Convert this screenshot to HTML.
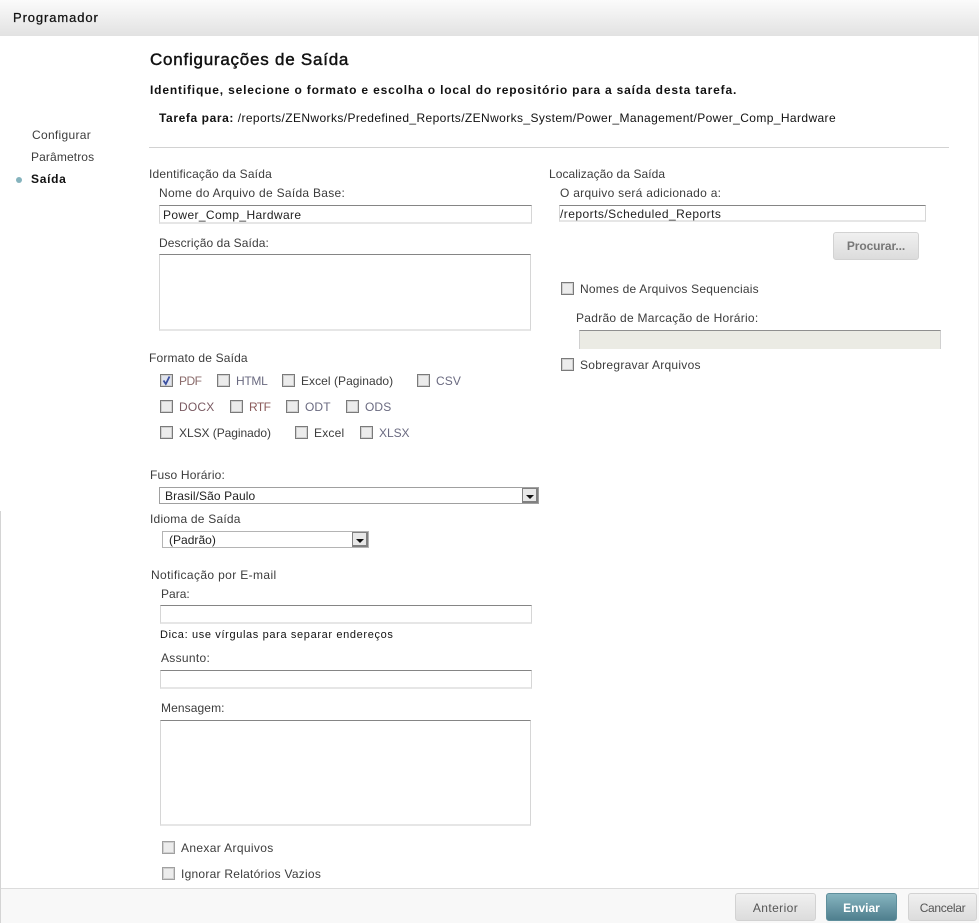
<!DOCTYPE html>
<html lang="pt">
<head>
<meta charset="utf-8">
<title>Programador</title>
<style>
html,body{margin:0;padding:0;background:#fff}
#p{position:relative;width:979px;height:923px;overflow:hidden;background:#fff;font-family:"Liberation Sans",sans-serif;font-size:12px;color:#3c3c3c}
#p div,#p span{position:absolute;box-sizing:border-box}
.t{white-space:nowrap;line-height:16px;height:16px;letter-spacing:.24px}
.b{font-weight:bold;color:#111}
.in{background:#fff;border:1px solid #e0e0e0;border-bottom:2px solid #e6e6e6;border-top:1px solid #858585;border-left-color:#d6d6d6;border-right-color:#d6d6d6}
.cb{width:13px;height:13px;border:1px solid #7a7a7a;background:#ececec;box-shadow:inset 0 0 0 1px #cfcfcf}
.btn{border:1px solid #d2d2d2;border-radius:3px;background:linear-gradient(#f0f0f0,#dcdcdc);text-align:center;font-weight:normal;color:#555;line-height:25px;letter-spacing:.2px}
.sel{background:#fff;border:1px solid #a0a0a0}
.ar{width:16px;top:0;bottom:0;right:0;background:#e8e8e8;border:2px solid #808080;border-top-width:1px;border-left-width:1px}
.ar:after{content:"";position:absolute;left:3px;top:6px;border:4px solid transparent;border-top:4px solid #111;border-bottom:0}
.c1{color:#6a6a80}
</style>
</head>
<body>
<div id="p">
  <div style="left:0;top:0;width:979px;height:36px;background:linear-gradient(#fbfbfb,#e2e2e2)"></div>
  <div class="t" style="left:13px;top:10px;font-size:13px;color:#111;letter-spacing:.9px;-webkit-text-stroke:.25px #111">Programador</div>

  <div style="left:0;top:511px;width:1px;height:412px;background:#d4d4d4"></div>
  <div style="left:978px;top:36px;width:1px;height:887px;background:#f0f0f0"></div>

  <div class="t" style="left:150px;top:51px;font-size:17px;line-height:18px;height:18px;color:#111;letter-spacing:.76px;-webkit-text-stroke:.45px #111">Configurações de Saída</div>
  <div class="t b" style="left:150px;top:82px;letter-spacing:.83px">Identifique, selecione o formato e escolha o local do repositório para a saída desta tarefa.</div>
  <div class="t" style="left:159px;top:110px;color:#111;letter-spacing:.39px"><b style="letter-spacing:.6px">Tarefa para:</b> /reports/ZENworks/Predefined_Reports/ZENworks_System/Power_Management/Power_Comp_Hardware</div>

  <div class="t" style="left:32px;top:127px;letter-spacing:.3px">Configurar</div>
  <div class="t" style="left:31px;top:149px;letter-spacing:.12px">Parâmetros</div>
  <div class="t b" style="left:31px;top:171px;letter-spacing:.7px">Saída</div>
  <div style="left:16px;top:177px;width:6px;height:6px;border-radius:50%;background:#85b3bd"></div>

  <div style="left:149px;top:147px;width:800px;height:1px;background:#d2d2d2"></div>

  <div class="t" style="left:149px;top:166px;letter-spacing:.19px">Identificação da Saída</div>
  <div class="t" style="left:159px;top:185px;letter-spacing:.29px">Nome do Arquivo de Saída Base:</div>
  <div class="in" style="left:159px;top:205px;width:373px;height:19px"></div>
  <div class="t" style="left:163px;top:207px;color:#222;letter-spacing:.37px">Power_Comp_Hardware</div>
  <div class="t" style="left:159px;top:235px;letter-spacing:.1px">Descrição da Saída:</div>
  <div class="in" style="left:159px;top:254px;width:372px;height:77px"></div>

  <div class="t" style="left:149px;top:350px;letter-spacing:.17px">Formato de Saída</div>

  <div class="cb" style="left:160px;top:374px;background:#dfe3ee"></div>
  <svg style="position:absolute;left:160px;top:374px" width="13" height="13" viewBox="0 0 13 13"><path d="M3.5 6.5 L5.8 10 L9.5 2.5" fill="none" stroke="#3a4fa0" stroke-width="1.8"/></svg>
  <div class="t" style="left:179px;top:373px;color:#8a6a6a;letter-spacing:-.55px">PDF</div>
  <div class="cb" style="left:217px;top:374px"></div>
  <div class="t c1" style="left:236px;top:373px;letter-spacing:-.3px">HTML</div>
  <div class="cb" style="left:282px;top:374px"></div>
  <div class="t" style="left:301px;top:373px;letter-spacing:.05px">Excel (Paginado)</div>
  <div class="cb" style="left:417px;top:374px"></div>
  <div class="t c1" style="left:436px;top:373px;letter-spacing:.1px">CSV</div>

  <div class="cb" style="left:160px;top:400px"></div>
  <div class="t" style="left:179px;top:399px;color:#7a5a62;letter-spacing:.2px">DOCX</div>
  <div class="cb" style="left:230px;top:400px"></div>
  <div class="t" style="left:249px;top:399px;color:#8a5a5a;letter-spacing:-.55px">RTF</div>
  <div class="cb" style="left:286px;top:400px"></div>
  <div class="t c1" style="left:305px;top:399px;letter-spacing:.1px">ODT</div>
  <div class="cb" style="left:346px;top:400px"></div>
  <div class="t c1" style="left:365px;top:399px;letter-spacing:.1px">ODS</div>

  <div class="cb" style="left:160px;top:426px"></div>
  <div class="t" style="left:179px;top:425px;letter-spacing:-.05px">XLSX (Paginado)</div>
  <div class="cb" style="left:295px;top:426px"></div>
  <div class="t" style="left:314px;top:425px;letter-spacing:.2px">Excel</div>
  <div class="cb" style="left:360px;top:426px"></div>
  <div class="t c1" style="left:379px;top:425px;letter-spacing:-.05px">XLSX</div>

  <div class="t" style="left:150px;top:467px;letter-spacing:.18px">Fuso Horário:</div>
  <div class="sel" style="left:159px;top:487px;width:380px;height:17px"><span class="ar"></span></div>
  <div class="t" style="left:165px;top:488px;color:#222;letter-spacing:.1px">Brasil/São Paulo</div>

  <div class="t" style="left:150px;top:511px;letter-spacing:.22px">Idioma de Saída</div>
  <div class="sel" style="left:162px;top:531px;width:207px;height:17px;border-color:#b4b4b4"><span class="ar"></span></div>
  <div class="t" style="left:169px;top:532px;color:#222;letter-spacing:.02px">(Padrão)</div>

  <div class="t" style="left:151px;top:567px;letter-spacing:.37px">Notificação por E-mail</div>
  <div class="t" style="left:161px;top:586px;letter-spacing:.02px">Para:</div>
  <div class="in" style="left:160px;top:605px;width:372px;height:19px"></div>
  <div class="t" style="left:160px;top:627px;font-size:11px;color:#111;letter-spacing:.64px">Dica: use vírgulas para separar endereços</div>
  <div class="t" style="left:161px;top:650px;letter-spacing:.3px">Assunto:</div>
  <div class="in" style="left:160px;top:670px;width:372px;height:19px"></div>
  <div class="t" style="left:161px;top:700px;letter-spacing:.1px">Mensagem:</div>
  <div class="in" style="left:160px;top:720px;width:371px;height:106px"></div>

  <div class="cb" style="left:162px;top:841px;border-color:#a0a0a0"></div>
  <div class="t" style="left:181px;top:840px;letter-spacing:.35px">Anexar Arquivos</div>
  <div class="cb" style="left:162px;top:867px;border-color:#a0a0a0"></div>
  <div class="t" style="left:181px;top:866px;letter-spacing:.25px">Ignorar Relatórios Vazios</div>

  <div class="t" style="left:549px;top:166px;letter-spacing:.07px">Localização da Saída</div>
  <div class="t" style="left:560px;top:185px;letter-spacing:.28px">O arquivo será adicionado a:</div>
  <div class="in" style="left:559px;top:205px;width:367px;height:17px"></div>
  <div class="t" style="left:560px;top:206px;color:#222;letter-spacing:.46px">/reports/Scheduled_Reports</div>
  <div class="btn" style="left:833px;top:232px;width:86px;height:28px;font-weight:bold;color:#777;line-height:27px;letter-spacing:-.1px">Procurar...</div>

  <div class="cb" style="left:561px;top:282px"></div>
  <div class="t" style="left:580px;top:281px;letter-spacing:.21px">Nomes de Arquivos Sequenciais</div>
  <div class="t" style="left:576px;top:310px;letter-spacing:.28px">Padrão de Marcação de Horário:</div>
  <div style="left:579px;top:330px;width:362px;height:19px;background:#ebebe4;border-top:1px solid #8f8f8f;border-left:1px solid #d0d0d0;border-right:1px solid #d0d0d0"></div>
  <div class="cb" style="left:561px;top:358px"></div>
  <div class="t" style="left:580px;top:357px;letter-spacing:.27px">Sobregravar Arquivos</div>

  <div style="left:1px;top:888px;width:978px;height:35px;background:#f8f8f8;border-top:1px solid #dcdcdc"></div>
  <div class="btn" style="left:735px;top:893px;width:81px;height:28px;letter-spacing:.4px;line-height:28px">Anterior</div>
  <div class="btn" style="left:826px;top:893px;width:71px;height:28px;background:linear-gradient(#86b4bf,#4f7f8e);border-color:#5f8f9c;color:#fff;font-weight:bold;letter-spacing:0;line-height:28px">Enviar</div>
  <div class="btn" style="left:908px;top:893px;width:69px;height:28px;letter-spacing:-.3px;line-height:28px">Cancelar</div>
</div>
</body>
</html>
